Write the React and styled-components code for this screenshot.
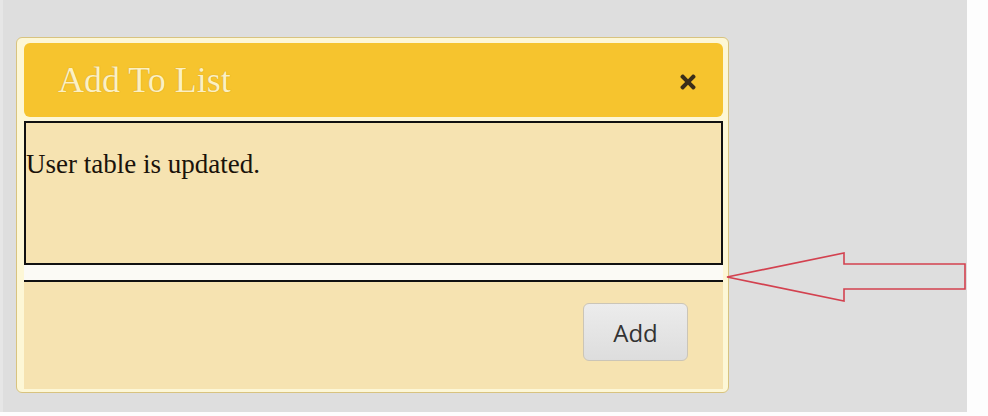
import React from "react";
import styled, { createGlobalStyle } from "styled-components";
import { FaTimes } from "react-icons/fa";

const GlobalStyle = createGlobalStyle`
  html, body {
    margin: 0;
    padding: 0;
    background: #fdfdfd;
  }
`;

const Backdrop = styled.div`
  position: relative;
  width: 967px;
  height: 412px;
  box-sizing: border-box;
  padding: 37px 0 0 13px;
  background: #dedede;
  border-left: 3px solid #e6e6e6;
`;

const Dialog = styled.div`
  width: 713px;
  height: 356px;
  box-sizing: border-box;
  padding: 5px 5px 3px 7px;
  background: #fdf7d6;
  border: 1px solid #d8c37f;
  border-radius: 6px;
  display: flex;
  flex-direction: column;
`;

const Header = styled.div`
  height: 74px;
  flex: none;
  display: flex;
  align-items: center;
  justify-content: space-between;
  padding: 0 24px 0 34px;
  background: #f6c42e;
  border-radius: 6px;
`;

const Title = styled.h2`
  margin: 0;
  font-family: "Liberation Serif", "Times New Roman", serif;
  font-weight: normal;
  font-size: 36px;
  color: #fcf0c2;
  text-shadow: 0 0 1px rgba(160, 110, 0, 0.6);
`;

const CloseButton = styled.button`
  border: 0;
  padding: 0;
  background: transparent;
  color: #3a2e1a;
  display: flex;
  font-size: 22px;
  margin-top: 4px;
  cursor: pointer;
`;

const MessageBox = styled.div`
  margin-top: 4px;
  height: 144px;
  flex: none;
  box-sizing: border-box;
  border: 2px solid #111;
  background: #f6e3b1;
  padding-top: 26px;
`;

const Message = styled.p`
  margin: 0;
  font-family: "Liberation Serif", "Times New Roman", serif;
  font-size: 27px;
  color: #1a120a;
`;

const Divider = styled.div`
  height: 15px;
  flex: none;
  background: #fbfaf5;
  border-bottom: 2px solid #111;
`;

const Footer = styled.div`
  flex: 1;
  display: flex;
  justify-content: flex-end;
  align-items: flex-start;
  padding: 21px 35px 0 0;
  background: #f6e3b1;
`;

const Button = styled.button`
  width: 105px;
  height: 58px;
  border: 1px solid #cbc5b7;
  border-radius: 6px;
  background: linear-gradient(#ececec, #dddddd);
  font-family: "Open Sans", "DejaVu Sans", sans-serif;
  font-size: 24px;
  color: #333;
  cursor: pointer;
`;

const Arrow = styled.svg`
  position: absolute;
  left: 0;
  top: 0;
  pointer-events: none;
`;

export default function App() {
  return (
    <>
      <GlobalStyle />
      <Backdrop>
        <Dialog>
          <Header>
            <Title>Add To List</Title>
            <CloseButton aria-label="close">
              <FaTimes />
            </CloseButton>
          </Header>
          <MessageBox>
            <Message>User table is updated.</Message>
          </MessageBox>
          <Divider />
          <Footer>
            <Button>Add</Button>
          </Footer>
        </Dialog>
        <Arrow width="985" height="416" viewBox="3 0 985 416">
          <polygon
            points="727,277 844,253 844,264 965,264 965,289 844,289 844,301"
            fill="none"
            stroke="#d3414f"
            strokeWidth="1.6"
          />
        </Arrow>
      </Backdrop>
    </>
  );
}
